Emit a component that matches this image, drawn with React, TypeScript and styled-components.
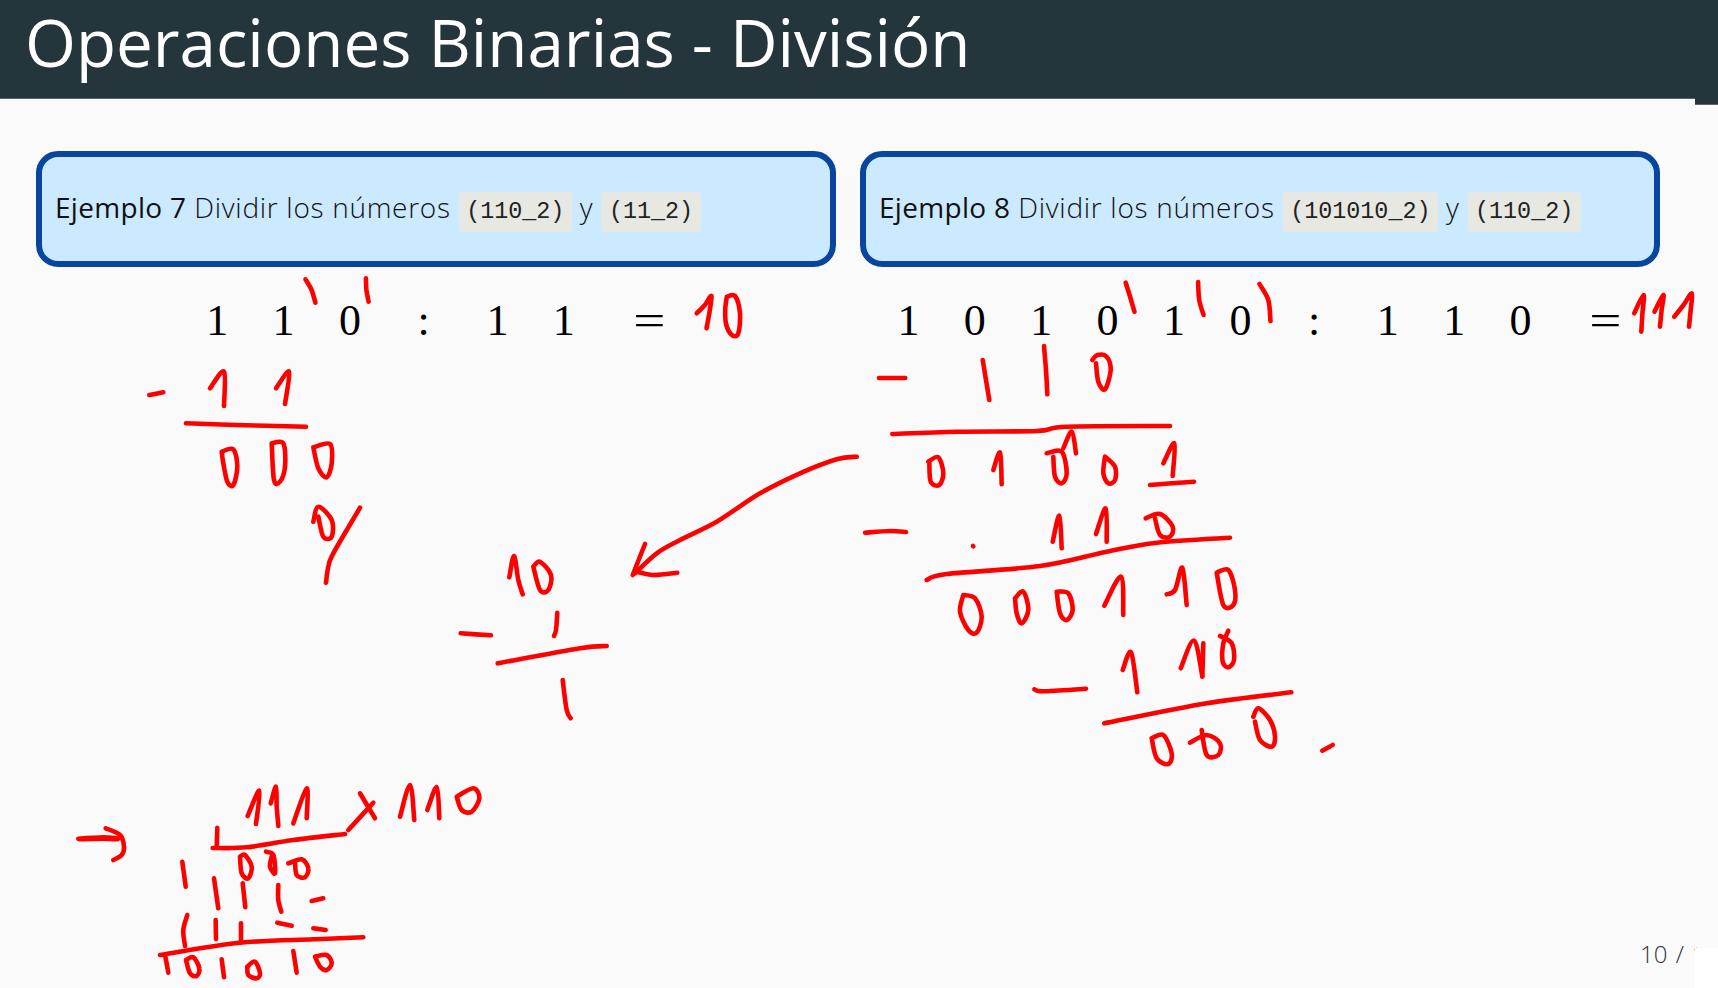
import styled, { createGlobalStyle } from "styled-components";

type Pt = [number, number];
type InkGroup = { ox: number; oy: number; sx: number; sy: number; strokes: Pt[][] };

// handwriting traced off the slide, each group in its own crop coordinates
const ink: InkGroup[] = [
  {
    ox: 0, oy: 0, sx: 1.823, sy: 3,
    strokes: [
      [[557, 838], [568, 870], [575, 908]],
      [[667, 835], [668, 870], [672, 905]],
      [[1270, 940], [1285, 915], [1297, 888], [1293, 940], [1288, 985]],
      [[1325, 890], [1340, 888], [1349, 940], [1346, 1000], [1335, 1006], [1324, 975], [1322, 930], [1325, 890]],
    ],
  },
  {
    ox: 858, oy: 0, sx: 1.823, sy: 3,
    strokes: [
      [[488, 848], [496, 890], [504, 935]],
      [[620, 846], [622, 900], [630, 945]],
      [[732, 852], [748, 900], [752, 963]],
      [[1415, 940], [1432, 885], [1430, 940], [1428, 995]],
      [[1452, 935], [1468, 885], [1465, 930], [1462, 980]],
      [[1488, 950], [1505, 915], [1520, 880], [1518, 930], [1515, 980]],
    ],
  },
  {
    ox: 840, oy: 350, sx: 3, sy: 3,
    strokes: [
      [[117, 84], [196, 84]],
      [[428, 30], [438, 90], [448, 150]],
      [[612, -12], [618, 60], [622, 133]],
      [[757, 30], [772, 15], [800, 20], [812, 60], [795, 118], [775, 95], [768, 40]],
      [[157, 252], [350, 245], [590, 243], [680, 230], [990, 228]],
      [[670, 295], [695, 245], [708, 310]],
      [[265, 335], [295, 322], [310, 370], [298, 405], [272, 395], [268, 335]],
      [[460, 360], [480, 308], [485, 403]],
      [[620, 310], [665, 305], [680, 370], [665, 400], [645, 380], [640, 320]],
      [[795, 320], [825, 350], [825, 390], [805, 400], [790, 370], [795, 320]],
      [[970, 340], [1003, 280], [998, 378]],
      [[930, 405], [1062, 395]],
      [[75, 548], [150, 543], [198, 546]],
      [[399, 588], [400, 589]],
      [[638, 575], [658, 497], [665, 595]],
      [[768, 552], [797, 475], [800, 575]],
      [[917, 505], [960, 492], [998, 530], [990, 560], [960, 555], [945, 505]],
      [[260, 690], [320, 672], [600, 648], [800, 605], [950, 578], [1170, 563]],
      [[370, 735], [360, 785], [385, 840], [410, 848], [425, 800], [405, 745], [370, 735]],
      [[525, 745], [550, 725], [565, 780], [545, 820], [530, 790], [525, 745]],
      [[650, 725], [685, 730], [698, 780], [680, 810], [660, 790], [650, 725]],
      [[793, 767], [843, 680], [850, 795]],
      [[980, 733], [1005, 720], [1027, 653], [1040, 765]],
      [[1130, 668], [1165, 660], [1185, 720], [1180, 765], [1150, 765], [1130, 668]],
      [[848, 960], [873, 907], [892, 1027]],
      [[1022, 955], [1062, 872], [1087, 978]],
      [[1090, 880], [1087, 980]],
      [[1140, 858], [1175, 880], [1182, 930], [1165, 952], [1148, 935], [1150, 880], [1165, 842]],
      [[583, 1018], [610, 1024], [738, 1016]],
      [[793, 1120], [1100, 1060], [1354, 1027]],
      [[935, 1165], [970, 1155], [995, 1210], [985, 1242], [950, 1225], [935, 1165]],
      [[1050, 1178], [1100, 1155], [1140, 1180], [1135, 1215], [1100, 1215], [1085, 1140]],
      [[1240, 1100], [1255, 1075], [1290, 1110], [1305, 1160], [1295, 1190], [1260, 1170], [1245, 1115]],
      [[1447, 1202], [1478, 1185]],
    ],
  },
  {
    ox: 60, oy: 760, sx: 3, sy: 3,
    strokes: [
      [[55, 236], [130, 232], [175, 235]],
      [[58, 238], [130, 236], [172, 238]],
      [[137, 205], [180, 225], [192, 260], [185, 285], [160, 300]],
      [[563, 168], [598, 92], [588, 192]],
      [[632, 130], [648, 80], [650, 140], [655, 198]],
      [[700, 190], [740, 85], [740, 175]],
      [[472, 203], [470, 262]],
      [[458, 264], [560, 262], [700, 240], [855, 222]],
      [[900, 100], [945, 175]],
      [[865, 210], [940, 128]],
      [[1020, 170], [1050, 75], [1063, 180]],
      [[1102, 150], [1130, 82], [1138, 175]],
      [[1190, 110], [1240, 85], [1258, 115], [1235, 155], [1205, 150], [1190, 110]],
      [[540, 290], [555, 285], [575, 320], [565, 355], [545, 340], [540, 290]],
      [[618, 275], [640, 285], [645, 340], [630, 320], [635, 290]],
      [[685, 310], [725, 298], [745, 325], [735, 352], [710, 345], [705, 305]],
      [[367, 305], [377, 380]],
      [[462, 355], [475, 445]],
      [[548, 370], [556, 442]],
      [[655, 375], [655, 420], [664, 455]],
      [[755, 423], [790, 415]],
      [[382, 465], [370, 510], [375, 558]],
      [[467, 480], [468, 537]],
      [[543, 490], [543, 545]],
      [[652, 488], [695, 497]],
      [[760, 505], [797, 510]],
      [[300, 585], [540, 548], [760, 538], [910, 532]],
      [[315, 585], [325, 638]],
      [[378, 600], [400, 592], [418, 625], [410, 648], [390, 640], [378, 600]],
      [[485, 598], [492, 652]],
      [[562, 620], [585, 605], [600, 640], [590, 655], [565, 645], [562, 620]],
      [[700, 573], [710, 638]],
      [[765, 590], [800, 585], [815, 610], [800, 630], [780, 620], [765, 590]],
    ],
  },
  {
    ox: 120, oy: 340, sx: 3, sy: 3,
    strokes: [
      [[88, 165], [130, 157]],
      [[270, 145], [312, 95], [312, 198]],
      [[468, 145], [507, 95], [495, 192]],
      [[198, 250], [350, 255], [558, 260]],
      [[305, 335], [340, 328], [352, 380], [340, 435], [322, 425], [310, 370], [305, 335]],
      [[455, 310], [490, 310], [495, 380], [480, 425], [462, 420], [455, 310]],
      [[580, 322], [630, 312], [635, 370], [620, 412], [595, 385], [580, 322]],
      [[580, 545], [595, 500], [635, 540], [635, 590], [610, 590], [595, 530]],
      [[720, 503], [640, 640], [625, 680], [618, 728]],
    ],
  },
  {
    ox: 440, oy: 440, sx: 3, sy: 3,
    strokes: [
      [[1250, 50], [1190, 58], [1080, 100], [960, 160], [830, 245], [720, 300], [650, 340], [585, 400]],
      [[615, 312], [578, 405]],
      [[590, 395], [640, 405], [712, 398]],
      [[208, 412], [222, 348], [235, 420], [248, 463]],
      [[280, 380], [300, 365], [333, 405], [325, 450], [300, 450], [280, 380]],
      [[62, 580], [153, 586]],
      [[352, 518], [348, 570], [342, 588]],
      [[173, 670], [420, 625], [500, 618]],
      [[368, 720], [380, 810], [392, 835]],
    ],
  },
];

// catmull-rom through the traced points so the strokes stay soft
function strokePath(points: Pt[], g: InkGroup) {
  const p = points.map(([x, y]): Pt => [g.ox + x / g.sx, g.oy + y / g.sy]);
  let d = `M${p[0][0].toFixed(1)} ${p[0][1].toFixed(1)}`;
  for (let i = 0; i < p.length - 1; i++) {
    const a = p[Math.max(i - 1, 0)];
    const b = p[i];
    const c = p[i + 1];
    const e = p[Math.min(i + 2, p.length - 1)];
    const c1x = b[0] + (c[0] - a[0]) / 6;
    const c1y = b[1] + (c[1] - a[1]) / 6;
    const c2x = c[0] - (e[0] - b[0]) / 6;
    const c2y = c[1] - (e[1] - b[1]) / 6;
    d += ` C${c1x.toFixed(1)} ${c1y.toFixed(1)} ${c2x.toFixed(1)} ${c2y.toFixed(1)} ${c[0].toFixed(1)} ${c[1].toFixed(1)}`;
  }
  return d;
}

function App() {
  return (
    <Slide>
      <GlobalStyle />
      <Header>
        <Title>Operaciones Binarias - División</Title>
      </Header>
      <Columns>
        <Column>
          <ExampleBox>
            <p>
              <strong>Ejemplo 7</strong> Dividir los números <Code>(110_2)</Code> y <Code>(11_2)</Code>
            </p>
          </ExampleBox>
          <MathRow>
            <Cell>1</Cell>
            <Cell>1</Cell>
            <Cell>0</Cell>
            <Cell $kind="colon">:</Cell>
            <Cell>1</Cell>
            <Cell>1</Cell>
            <Cell $kind="equals"><EqualsSign>=</EqualsSign></Cell>
          </MathRow>
        </Column>
        <Column>
          <ExampleBox>
            <p>
              <strong>Ejemplo 8</strong> Dividir los números <Code>(101010_2)</Code> y <Code>(110_2)</Code>
            </p>
          </ExampleBox>
          <MathRow>
            <Cell>1</Cell>
            <Cell>0</Cell>
            <Cell>1</Cell>
            <Cell>0</Cell>
            <Cell>1</Cell>
            <Cell>0</Cell>
            <Cell $kind="colon">:</Cell>
            <Cell>1</Cell>
            <Cell>1</Cell>
            <Cell>0</Cell>
            <Cell $kind="equals"><EqualsSign>=</EqualsSign></Cell>
          </MathRow>
        </Column>
      </Columns>
      <PageNumber>10 / 13</PageNumber>
      <CornerPatch />
      <InkLayer viewBox="0 0 1718 988" fill="none">
        {ink.map((g, i) =>
          g.strokes.map((s, j) => <path key={`${i}-${j}`} d={strokePath(s, g)} />)
        )}
      </InkLayer>
    </Slide>
  );
}

const GlobalStyle = createGlobalStyle`
  html, body {
    margin: 0;
    padding: 0;
    background: #fafafa;
  }
`;

const Slide = styled.div`
  position: relative;
  width: 1718px;
  height: 988px;
  overflow: hidden;
  background: #fafafa;
  font-family: "Open Sans", "Noto Sans", sans-serif;
  color: #222;
`;

const Header = styled.header`
  position: relative;
  box-sizing: border-box;
  height: 99px;
  padding-left: 25px;
  background: #24363b;
  border-bottom: 1px solid #56666c;
  &::after {
    content: "";
    position: absolute;
    right: 0;
    top: 98px;
    width: 23px;
    height: 6px;
    background: #24363b;
    border-bottom: 1px solid #56666c;
  }
`;

const Title = styled.h1`
  margin: 0;
  font-size: 65.5px;
  line-height: 84px;
  font-weight: 400;
  color: #fff;
`;

const Columns = styled.main`
  display: grid;
  grid-template-columns: 800px 800px;
  column-gap: 24px;
  padding: 52px 0 0 36px;
`;

const Column = styled.section`
  display: flex;
  flex-direction: column;
`;

const ExampleBox = styled.div`
  box-sizing: border-box;
  display: flex;
  align-items: center;
  height: 116px;
  padding: 2px 13px 0;
  background: #cbeaff;
  border: 6px solid #07459f;
  border-radius: 22px;
  p {
    margin: 0;
    font-size: 28px;
    font-weight: 300;
    letter-spacing: 0.7px;
    color: #111;
    white-space: nowrap;
  }
  strong {
    font-weight: 500;
    letter-spacing: 0.3px;
  }
`;

const Code = styled.code`
  display: inline-block;
  padding: 0 7.5px;
  line-height: 40px;
  font-family: "Liberation Mono", monospace;
  font-size: 23.4px;
  letter-spacing: 0;
  background: #e8e8e3;
  border-radius: 4px;
  color: #222;
`;

const MathRow = styled.div`
  display: flex;
  justify-content: center;
  padding-left: 13px;
  margin-top: 24px;
  font-family: "Liberation Serif", serif;
  font-size: 44px;
  line-height: 60px;
  color: #000;
`;

const Cell = styled.span<{ $kind?: "colon" | "equals" }>`
  width: ${(p) => (p.$kind === "colon" ? 81 : p.$kind === "equals" ? 104 : 66.4)}px;
  text-align: center;
`;

const EqualsSign = styled.span`
  display: inline-block;
  transform: scaleX(1.3);
`;

const PageNumber = styled.div`
  position: absolute;
  left: 1640px;
  top: 937px;
  width: 57px;
  overflow: hidden;
  font-size: 24px;
  font-weight: 300;
  line-height: 34px;
  word-spacing: 2px;
  color: #333;
  white-space: nowrap;
`;

const CornerPatch = styled.div`
  position: absolute;
  right: 0;
  bottom: 0;
  width: 23px;
  height: 40px;
  background: #fff;
`;

const InkLayer = styled.svg`
  position: absolute;
  left: 0;
  top: 0;
  width: 1718px;
  height: 988px;
  path {
    stroke: #ff0000;
    stroke-width: 4.6;
    stroke-linecap: round;
    stroke-linejoin: round;
  }
`;

export default App;
